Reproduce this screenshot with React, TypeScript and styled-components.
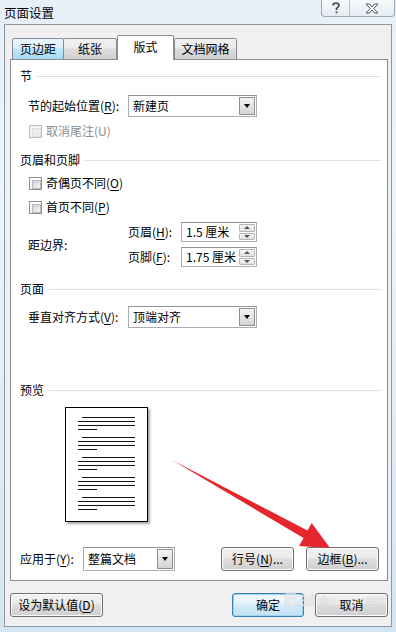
import styled, { createGlobalStyle } from "styled-components";

const GlobalStyle = createGlobalStyle`
  html, body {
    margin: 0;
    padding: 0;
    background: #d6e6f3;
  }
  * {
    box-sizing: border-box;
  }
`;

const Window = styled.div`
  position: relative;
  width: 396px;
  height: 632px;
  display: flex;
  flex-direction: column;
  background: linear-gradient(180deg, #e7f0f8 0%, #eef4fa 30%, #d3e5f3 100%);
  font-family: "Noto Sans CJK SC", "Liberation Sans", sans-serif;
  font-size: 12px;
  color: #000;
  overflow: hidden;
`;

const TitleBar = styled.div`
  height: 25px;
  display: flex;
  align-items: flex-start;
  padding-left: 4px;
`;

const Title = styled.div`
  font-size: 12.5px;
  line-height: 16px;
  margin-top: 5px;
`;

const CaptionButtons = styled.div`
  margin-left: auto;
  margin-right: 1px;
  display: flex;
  height: 17px;
  border: 1px solid #9aa6b2;
  border-top: none;
  border-radius: 0 0 4px 4px;
  background: linear-gradient(180deg, #f7fafc, #e4ecf3);
`;

const CaptionButton = styled.div<{ $w: number }>`
  width: ${(p) => p.$w}px;
  display: flex;
  align-items: center;
  justify-content: center;
  & + & {
    border-left: 1px solid #b4bec8;
  }
`;

const Body = styled.div`
  flex: 1;
  margin: 0 4px 5px 4px;
  border: 1px solid #8e98a3;
  background: #f0f0f0;
  padding: 10px 3px 9px 5px;
  display: flex;
  flex-direction: column;
`;

const TabBar = styled.div`
  display: flex;
  align-items: flex-end;
  padding-left: 2px;
  height: 25px;
  margin-bottom: -1px;
  position: relative;
  z-index: 1;
`;

const Tab = styled.div<{ $w: number; $active?: boolean; $hover?: boolean }>`
  width: ${(p) => p.$w}px;
  height: ${(p) => (p.$active ? 25 : 22)}px;
  margin-left: ${(p) => (p.$active ? 0 : -1)}px;
  margin-right: ${(p) => (p.$active ? 1 : 0)}px;
  display: flex;
  align-items: center;
  justify-content: center;
  line-height: 16px;
  padding-bottom: ${(p) => (p.$active ? 2 : 0)}px;
  border: 1px solid #898c95;
  border-bottom: ${(p) => (p.$active ? "none" : "1px solid #898c95")};
  border-radius: 2px 2px 0 0;
  background: ${(p) =>
    p.$active
      ? "#ffffff"
      : p.$hover
      ? "linear-gradient(180deg, #eaf6fd 0%, #d9f0fc 45%, #bee6fd 50%, #a7d9f5 100%)"
      : "linear-gradient(180deg, #f2f2f2 0%, #ebebeb 45%, #dddddd 50%, #cfcfcf 100%)"};
  &:first-child {
    margin-left: 0;
  }
`;

const Panel = styled.div`
  border: 1px solid #898c95;
  background: #ffffff;
  padding: 8px 6px 9px 9px;
  display: flex;
  flex-direction: column;
`;

const SectionHeader = styled.div<{ $mt?: number }>`
  display: flex;
  align-items: center;
  gap: 5px;
  height: 16px;
  line-height: 16px;
  margin-top: ${(p) => p.$mt ?? 0}px;
  &::after {
    content: "";
    flex: 1;
    height: 1px;
    background: #dcdfe3;
    margin-top: 1px;
  }
`;

const FieldRow = styled.div<{ $mt?: number; $indent?: number }>`
  display: flex;
  align-items: center;
  margin-top: ${(p) => p.$mt ?? 0}px;
  padding-left: ${(p) => p.$indent ?? 8}px;
`;

const Label = styled.div<{ $w: number; $disabled?: boolean }>`
  width: ${(p) => p.$w}px;
  flex-shrink: 0;
  line-height: 16px;
  white-space: nowrap;
  color: ${(p) => (p.$disabled ? "#8d8d8d" : "#000")};
`;

const Key = styled.span`
  text-decoration: underline;
  text-underline-offset: 2px;
`;

const SelectBox = styled.div<{ $w: number; $h: number }>`
  width: ${(p) => p.$w}px;
  height: ${(p) => p.$h}px;
  border: 1px solid #abadb3;
  border-top-color: #8f9299;
  background: #fff;
  display: flex;
  align-items: stretch;
  padding: 1px;
`;

const SelectValue = styled.div`
  flex: 1;
  display: flex;
  align-items: center;
  padding-left: 3px;
  line-height: 16px;
`;

const DropButton = styled.div`
  width: 16px;
  border: 1px solid #8d8f94;
  background: linear-gradient(180deg, #f4f4f4 0%, #e4e4e4 50%, #d4d4d4 100%);
  display: flex;
  align-items: center;
  justify-content: center;
  &::before {
    content: "";
    border-left: 3.5px solid transparent;
    border-right: 3.5px solid transparent;
    border-top: 4px solid #000;
  }
`;

const Checkbox = styled.div<{ $disabled?: boolean }>`
  width: 13px;
  height: 13px;
  border: 1px solid ${(p) => (p.$disabled ? "#bcbcbc" : "#8e8f8f")};
  background: ${(p) => (p.$disabled ? "#f4f4f4" : "#fff")};
  padding: 2px;
  margin-left: 1px;
  margin-right: 4px;
  &::before {
    content: "";
    display: block;
    width: 100%;
    height: 100%;
    background: ${(p) =>
      p.$disabled
        ? "#ececec"
        : "linear-gradient(135deg, #cbcfd5 0%, #f6f6f6 100%)"};
    border: 1px solid ${(p) => (p.$disabled ? "#e2e2e2" : "#b9bcc1")};
  }
`;

const MarginBlock = styled.div`
  display: flex;
  align-items: center;
  margin-top: 7px;
  padding-left: 8px;
`;

const SpinnerColumn = styled.div`
  display: flex;
  flex-direction: column;
  gap: 5px;
`;

const SpinRow = styled.div`
  display: flex;
  align-items: center;
`;

const SpinBox = styled.div`
  width: 76px;
  height: 20px;
  border: 1px solid #abadb3;
  border-top-color: #8f9299;
  background: #fff;
  display: flex;
  padding: 1px;
`;

const SpinButtons = styled.div`
  width: 16px;
  display: flex;
  flex-direction: column;
  gap: 1px;
`;

const SpinButton = styled.div<{ $up?: boolean }>`
  flex: 1;
  border: 1px solid #b4b6ba;
  border-radius: 1px;
  background: linear-gradient(180deg, #f6f6f6, #e2e2e2);
  display: flex;
  align-items: center;
  justify-content: center;
  &::before {
    content: "";
    border-left: 3px solid transparent;
    border-right: 3px solid transparent;
    ${(p) =>
      p.$up ? "border-bottom: 3px solid #555;" : "border-top: 3px solid #555;"}
  }
`;

const PreviewPage = styled.div`
  width: 83px;
  height: 115px;
  margin-top: 9px;
  margin-left: 45px;
  border: 1px solid #000;
  background: #fff;
  box-shadow: 2px 2px 2px rgba(0, 0, 0, 0.35);
  padding: 9px 12px 0 12px;
  display: flex;
  flex-direction: column;
  gap: 7px;
`;

const ParaGroup = styled.div`
  display: flex;
  flex-direction: column;
  gap: 3px;
`;

const TextLine = styled.div<{ $kind: "first" | "full" | "last" }>`
  height: 1px;
  background: #111;
  margin-left: ${(p) => (p.$kind === "first" ? 4 : 0)}px;
  width: ${(p) => (p.$kind === "last" ? "19px" : "auto")};
`;

const ApplyRow = styled.div`
  display: flex;
  align-items: center;
  margin-top: 25px;
  padding-left: 0;
`;

const PushButton = styled.div<{ $w: number; $default?: boolean }>`
  width: ${(p) => p.$w}px;
  height: 24px;
  border: 1px solid ${(p) => (p.$default ? "#3c7fb1" : "#707070")};
  border-radius: 3px;
  display: flex;
  align-items: center;
  justify-content: center;
  line-height: 16px;
  background: ${(p) =>
    p.$default
      ? "linear-gradient(180deg, #f2f9fd 0%, #e4f3fb 45%, #d2ebf9 50%, #c3e2f4 100%)"
      : "linear-gradient(180deg, #f2f2f2 0%, #ebebeb 45%, #dddddd 50%, #cfcfcf 100%)"};
  box-shadow: inset 0 0 0 1px ${(p) => (p.$default ? "#9fd3f2" : "#fcfcfc")};
`;

const RightButtons = styled.div`
  margin-left: auto;
  margin-right: 2px;
  display: flex;
  gap: 12px;
`;

const Footer = styled.div`
  display: flex;
  align-items: center;
  margin-top: 12px;
  gap: 11px;
`;

const Spacer = styled.div`
  flex: 1;
`;

const Overlay = styled.svg`
  position: absolute;
  left: 0;
  top: 0;
  pointer-events: none;
`;

// faint site watermark lying over the footer buttons
const Watermark = styled.div`
  position: absolute;
  left: 284px;
  top: 588px;
  display: flex;
  align-items: baseline;
  font-family: "Liberation Sans", "Noto Sans CJK SC", sans-serif;
  font-weight: bold;
  font-size: 20px;
  line-height: 22px;
  color: rgba(255, 255, 255, 0.6);
  text-shadow: 0 0 1px rgba(110, 110, 110, 0.35);
  pointer-events: none;
`;

const WatermarkPart = styled.span<{ $size: number; $ml?: number }>`
  font-size: ${(p) => p.$size}px;
  margin-left: ${(p) => p.$ml ?? 0}px;
`;

function Select({ value, w, h }: { value: string; w: number; h: number }) {
  return (
    <SelectBox $w={w} $h={h}>
      <SelectValue>{value}</SelectValue>
      <DropButton />
    </SelectBox>
  );
}

function Spinner({ value }: { value: string }) {
  return (
    <SpinBox>
      <SelectValue>{value}</SelectValue>
      <SpinButtons>
        <SpinButton $up />
        <SpinButton />
      </SpinButtons>
    </SpinBox>
  );
}

const groups = [0, 1, 2, 3, 4];

export default function App() {
  return (
    <>
      <GlobalStyle />
      <Window>
        <TitleBar>
          <Title>页面设置</Title>
          <CaptionButtons>
            <CaptionButton $w={27}>
              <svg width="10" height="12" viewBox="0 0 10 12">
                <path
                  d="M2 3.5 C2 1.5 3.5 1 5 1 C6.8 1 8 2 8 3.5 C8 5 6.2 5.5 5.5 6.5 L5.5 8"
                  fill="none"
                  stroke="#444"
                  strokeWidth="1.6"
                />
                <circle cx="5.5" cy="10.3" r="1" fill="#444" />
              </svg>
            </CaptionButton>
            <CaptionButton $w={45}>
              <svg width="14" height="11" viewBox="0 0 14 11">
                <path
                  d="M1 1 H4.5 L7 4 L9.5 1 H13 L8.8 5.5 L13 10 H9.5 L7 7 L4.5 10 H1 L5.2 5.5 Z"
                  fill="#fafafa"
                  stroke="#555"
                  strokeWidth="1"
                  strokeLinejoin="round"
                />
              </svg>
            </CaptionButton>
          </CaptionButtons>
        </TitleBar>

        <Body>
          <TabBar>
            <Tab $w={52} $hover>页边距</Tab>
            <Tab $w={54}>纸张</Tab>
            <Tab $w={57} $active>版式</Tab>
            <Tab $w={63}>文档网格</Tab>
          </TabBar>

          <Panel>
            <SectionHeader>节</SectionHeader>
            <FieldRow $mt={11}>
              <Label $w={100}>
                节的起始位置(<Key>R</Key>):
              </Label>
              <Select value="新建页" w={129} h={22} />
            </FieldRow>
            <FieldRow $mt={6}>
              <Checkbox $disabled />
              <Label $w={120} $disabled>
                取消尾注(U)
              </Label>
            </FieldRow>

            <SectionHeader $mt={13}>页眉和页脚</SectionHeader>
            <FieldRow $mt={7}>
              <Checkbox />
              <Label $w={120}>
                奇偶页不同(<Key>O</Key>)
              </Label>
            </FieldRow>
            <FieldRow $mt={8}>
              <Checkbox />
              <Label $w={120}>
                首页不同(<Key>P</Key>)
              </Label>
            </FieldRow>
            <MarginBlock>
              <Label $w={100}>距边界:</Label>
              <SpinnerColumn>
                <SpinRow>
                  <Label $w={53}>
                    页眉(<Key>H</Key>):
                  </Label>
                  <Spinner value="1.5 厘米" />
                </SpinRow>
                <SpinRow>
                  <Label $w={53}>
                    页脚(<Key>F</Key>):
                  </Label>
                  <Spinner value="1.75 厘米" />
                </SpinRow>
              </SpinnerColumn>
            </MarginBlock>

            <SectionHeader $mt={14}>页面</SectionHeader>
            <FieldRow $mt={9}>
              <Label $w={100}>
                垂直对齐方式(<Key>V</Key>):
              </Label>
              <Select value="顶端对齐" w={129} h={22} />
            </FieldRow>

            <SectionHeader $mt={54}>预览</SectionHeader>
            <PreviewPage>
              {groups.map((g) => (
                <ParaGroup key={g}>
                  <TextLine $kind="first" />
                  <TextLine $kind="full" />
                  <TextLine $kind="full" />
                  <TextLine $kind="last" />
                </ParaGroup>
              ))}
            </PreviewPage>

            <ApplyRow>
              <Label $w={63}>
                应用于(<Key>Y</Key>):
              </Label>
              <Select value="整篇文档" w={92} h={24} />
              <RightButtons>
                <PushButton $w={73}>
                  行号(<Key>N</Key>)...
                </PushButton>
                <PushButton $w={73}>
                  边框(<Key>B</Key>)...
                </PushButton>
              </RightButtons>
            </ApplyRow>
          </Panel>

          <Footer>
            <PushButton $w={93}>
              设为默认值(<Key>D</Key>)
            </PushButton>
            <Spacer />
            <PushButton $w={72} $default>
              确定
            </PushButton>
            <PushButton $w={73}>取消</PushButton>
          </Footer>
        </Body>

        <Watermark>
          <WatermarkPart $size={20}>Bai</WatermarkPart>
          <WatermarkPart $size={15} $ml={2}>du</WatermarkPart>
          <WatermarkPart $size={10} $ml={30}>经验</WatermarkPart>
        </Watermark>

        <Overlay width="396" height="632" viewBox="0 0 396 632">
          <polygon
            points="172,460 307.5,530.5 311.7,523.1 330,548 299.1,545.9 303.5,538"
            fill="#e5262c"
          />
        </Overlay>
      </Window>
    </>
  );
}
